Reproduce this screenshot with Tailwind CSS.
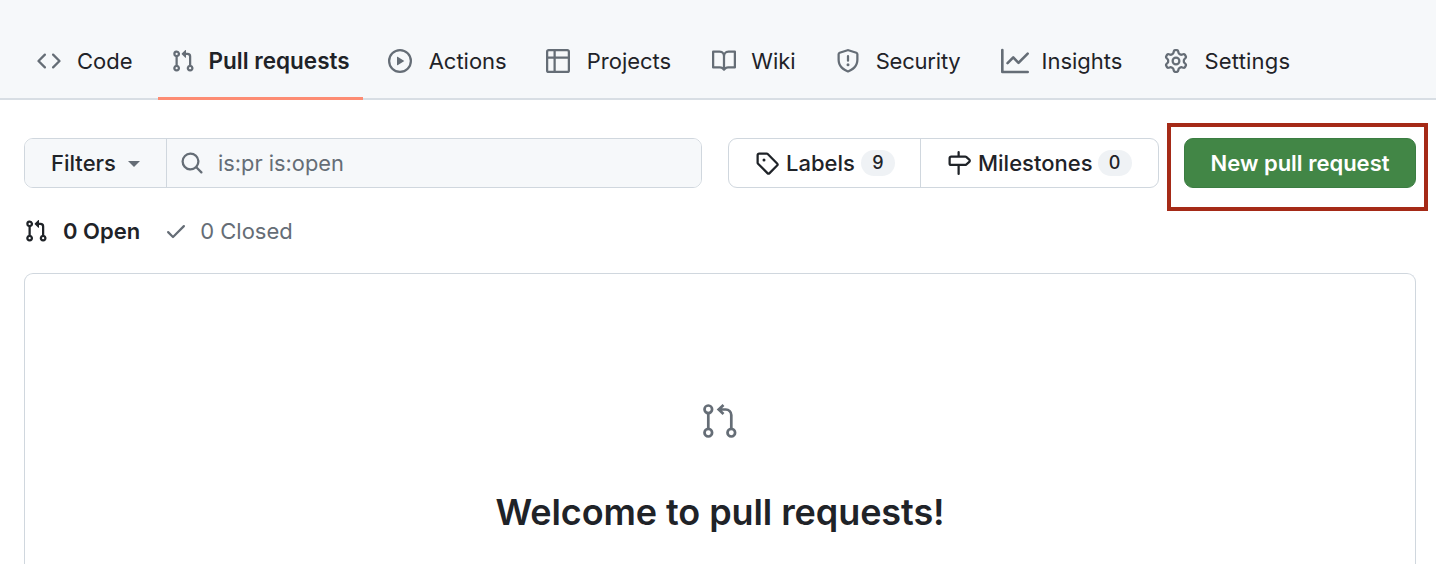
<!DOCTYPE html>
<html lang="en">
<head>
  <meta charset="UTF-8" />
  <title>Pull requests</title>
  <script src="https://cdn.jsdelivr.net/npm/@tailwindcss/browser@4"></script>
</head>
<body class="relative h-[564px] overflow-hidden bg-white font-['Inter',sans-serif] text-[22px] text-[#1f2328]">

  <!-- tabs -->
  <nav class="flex h-[100px] items-end border-b-2 border-[#d8dee4] bg-[#f6f8fa] px-6">
    <a class="flex h-[74px] items-center gap-4 px-[13px]">
      <svg class="size-6 fill-[#656d76]" viewBox="0 0 16 16"><path d="m11.28 3.22 4.25 4.25a.75.75 0 0 1 0 1.06l-4.25 4.25a.749.749 0 0 1-1.275-.326.749.749 0 0 1 .215-.734L13.94 8l-3.72-3.72a.749.749 0 0 1 .326-1.275.749.749 0 0 1 .734.215Zm-6.56 0a.751.751 0 0 1 1.042.018.751.751 0 0 1 .018 1.042L2.06 8l3.72 3.72a.749.749 0 0 1-.326 1.275.749.749 0 0 1-.734-.215L.47 8.53a.75.75 0 0 1 0-1.06Z"/></svg>
      <span>Code</span>
    </a>
    <a class="-mb-0.5 ml-3 flex h-[75px] items-center gap-[14px] border-b-[3px] border-[#fd8c73] px-[13px] text-[22.5px] font-semibold">
      <svg class="size-6 fill-[#656d76]" viewBox="0 0 16 16"><path d="M1.5 3.25a2.25 2.25 0 1 1 3 2.122v5.256a2.251 2.251 0 1 1-1.5 0V5.372A2.25 2.25 0 0 1 1.5 3.25Zm5.677-.177L9.573.677A.25.25 0 0 1 10 .854V2.5h1A2.5 2.5 0 0 1 13.5 5v5.628a2.251 2.251 0 1 1-1.5 0V5a1 1 0 0 0-1-1h-1v1.646a.25.25 0 0 1-.427.177L7.177 3.427a.25.25 0 0 1 0-.354ZM3.75 2.5a.75.75 0 1 0 0 1.5.75.75 0 0 0 0-1.5Zm0 9.5a.75.75 0 1 0 0 1.5.75.75 0 0 0 0-1.5Zm8.25.75a.75.75 0 1 0 1.5 0 .75.75 0 0 0-1.5 0Z"/></svg>
      <span>Pull requests</span>
    </a>
    <a class="ml-3 flex h-[74px] items-center gap-[17px] px-[13px]">
      <svg class="size-6 fill-[#656d76]" viewBox="0 0 16 16"><path d="M8 0a8 8 0 1 1 0 16A8 8 0 0 1 8 0ZM1.5 8a6.5 6.5 0 1 0 13 0 6.5 6.5 0 0 0-13 0Zm4.879-2.773 4.264 2.559a.25.25 0 0 1 0 .428l-4.264 2.559A.25.25 0 0 1 6 10.559V5.442a.25.25 0 0 1 .379-.215Z"/></svg>
      <span>Actions</span>
    </a>
    <a class="ml-[13px] flex h-[74px] items-center gap-[17px] px-[13px]">
      <svg class="size-6 fill-[#656d76]" viewBox="0 0 16 16"><path d="M0 1.75C0 .784.784 0 1.75 0h12.5C15.216 0 16 .784 16 1.75v12.5A1.75 1.75 0 0 1 14.25 16H1.75A1.75 1.75 0 0 1 0 14.25ZM6.5 6.5v8h7.75a.25.25 0 0 0 .25-.25V6.5Zm8-1.5V1.75a.25.25 0 0 0-.25-.25H6.5V5Zm-13 1.5v7.75c0 .138.112.25.25.25H5v-8ZM5 5V1.5H1.75a.25.25 0 0 0-.25.25V5Z"/></svg>
      <span>Projects</span>
    </a>
    <a class="ml-[15px] flex h-[74px] items-center gap-[15px] px-[13px]">
      <svg class="size-6 fill-[#656d76]" viewBox="0 0 16 16"><path d="M0 1.75A.75.75 0 0 1 .75 1h4.253c1.227 0 2.317.59 3 1.501A3.743 3.743 0 0 1 11.006 1h4.245a.75.75 0 0 1 .75.75v10.5a.75.75 0 0 1-.75.75h-4.507a2.25 2.25 0 0 0-1.591.659l-.622.621a.75.75 0 0 1-1.06 0l-.622-.621A2.25 2.25 0 0 0 5.258 13H.75a.75.75 0 0 1-.75-.75Zm7.251 10.324.004-5.073-.002-2.253A2.25 2.25 0 0 0 5.003 2.5H1.5v9h3.757a3.75 3.75 0 0 1 1.994.574ZM8.755 4.75l-.004 7.322a3.752 3.752 0 0 1 1.992-.572H14.5v-9h-3.495a2.25 2.25 0 0 0-2.25 2.25Z"/></svg>
      <span>Wiki</span>
    </a>
    <a class="ml-[14px] flex h-[74px] items-center gap-4 px-[13px]">
      <svg class="size-6 fill-[#656d76]" viewBox="0 0 16 16"><path d="M7.467.133a1.748 1.748 0 0 1 1.066 0l5.25 1.68A1.75 1.75 0 0 1 15 3.48V7c0 1.566-.32 3.182-1.303 4.682-.983 1.498-2.585 2.813-5.032 3.855a1.697 1.697 0 0 1-1.33 0c-2.447-1.042-4.049-2.357-5.032-3.855C1.32 10.182 1 8.566 1 7V3.48a1.75 1.75 0 0 1 1.217-1.667Zm.61 1.429a.25.25 0 0 0-.153 0l-5.25 1.68a.25.25 0 0 0-.174.238V7c0 1.358.275 2.666 1.057 3.86.784 1.194 2.121 2.34 4.366 3.297a.196.196 0 0 0 .154 0c2.245-.956 3.582-2.104 4.366-3.298C13.225 9.666 13.5 8.36 13.5 7V3.48a.251.251 0 0 0-.174-.237l-5.25-1.68ZM8.75 4.75v3a.75.75 0 0 1-1.5 0v-3a.75.75 0 0 1 1.5 0ZM9 10.5a1 1 0 1 1-2 0 1 1 0 0 1 2 0Z"/></svg>
      <span class="tracking-[-0.2px]">Security</span>
    </a>
    <a class="ml-3.5 flex h-[74px] items-center gap-[13px] px-[13px]">
      <svg class="size-7 fill-[#656d76]" viewBox="0 0 16 16"><path d="M1.5 1.75V13.5h13.75a.75.75 0 0 1 0 1.5H.75a.75.75 0 0 1-.75-.75V1.75a.75.75 0 0 1 1.5 0Zm14.28 2.53-5.25 5.25a.75.75 0 0 1-1.06 0L7 7.06 4.28 9.78a.751.751 0 0 1-1.042-.018.751.751 0 0 1-.018-1.042l3.25-3.25a.75.75 0 0 1 1.06 0L10 7.94l4.72-4.72a.751.751 0 0 1 1.042.018.751.751 0 0 1 .018 1.042Z"/></svg>
      <span>Insights</span>
    </a>
    <a class="ml-4 flex h-[74px] items-center gap-4 px-[13px]">
      <svg class="size-6 fill-[#656d76]" viewBox="0 0 16 16"><path d="M8 0a8.2 8.2 0 0 1 .701.031C9.444.095 9.99.645 10.16 1.29l.288 1.107c.018.066.079.158.212.224.231.114.454.243.668.386.123.082.233.09.299.071l1.103-.303c.644-.176 1.392.021 1.82.63.27.385.506.792.704 1.218.315.675.111 1.422-.364 1.891l-.814.806c-.049.048-.098.147-.088.294.016.257.016.515 0 .772-.01.147.038.246.088.294l.814.806c.475.469.679 1.216.364 1.891a7.977 7.977 0 0 1-.704 1.217c-.428.61-1.176.807-1.82.63l-1.102-.302c-.067-.019-.177-.011-.3.071a5.909 5.909 0 0 1-.668.386c-.133.066-.194.158-.211.224l-.29 1.106c-.168.646-.715 1.196-1.458 1.26a8.006 8.006 0 0 1-1.402 0c-.743-.064-1.289-.614-1.458-1.26l-.289-1.106c-.018-.066-.079-.158-.212-.224a5.738 5.738 0 0 1-.668-.386c-.123-.082-.233-.09-.299-.071l-1.103.303c-.644.176-1.392-.021-1.82-.63a8.12 8.12 0 0 1-.704-1.218c-.315-.675-.111-1.422.363-1.891l.815-.806c.05-.048.098-.147.088-.294a6.214 6.214 0 0 1 0-.772c.01-.147-.038-.246-.088-.294l-.815-.806C.635 6.045.431 5.298.746 4.623a7.92 7.92 0 0 1 .704-1.217c.428-.61 1.176-.807 1.82-.63l1.102.302c.067.019.177.011.3-.071.214-.143.437-.272.668-.386.133-.066.194-.158.211-.224l.29-1.106C6.009.645 6.556.095 7.299.03 7.53.01 7.764 0 8 0Zm-.571 1.525c-.036.003-.108.036-.137.146l-.289 1.105c-.147.561-.549.967-.998 1.189-.173.086-.34.183-.5.29-.417.278-.97.423-1.529.27l-1.103-.303c-.109-.03-.175.016-.195.045-.22.312-.412.644-.573.99-.014.031-.021.11.059.19l.815.806c.411.406.562.957.53 1.456a4.709 4.709 0 0 0 0 .582c.032.499-.119 1.05-.53 1.456l-.815.806c-.081.08-.073.159-.059.19.162.346.353.677.573.989.02.03.085.076.195.046l1.102-.303c.56-.153 1.113-.008 1.53.27.161.107.328.204.501.29.447.222.85.629.997 1.189l.289 1.105c.029.109.101.143.137.146a6.6 6.6 0 0 0 1.142 0c.036-.003.108-.036.137-.146l.289-1.105c.147-.561.549-.967.998-1.189.173-.086.34-.183.5-.29.417-.278.97-.423 1.529-.27l1.103.303c.109.029.175-.016.195-.045.22-.313.411-.644.573-.99.014-.031.021-.11-.059-.19l-.815-.806c-.411-.406-.562-.957-.53-1.456a4.709 4.709 0 0 0 0-.582c-.032-.499.119-1.05.53-1.456l.815-.806c.081-.08.073-.159.059-.19a6.464 6.464 0 0 0-.573-.989c-.02-.03-.085-.076-.195-.046l-1.102.303c-.56.153-1.113.008-1.53-.27a4.44 4.44 0 0 0-.501-.29c-.447-.222-.85-.629-.997-1.189l-.289-1.105c-.029-.11-.101-.143-.137-.146a6.6 6.6 0 0 0-1.142 0ZM11 8a3 3 0 1 1-6 0 3 3 0 0 1 6 0ZM9.5 8a1.5 1.5 0 1 0-3.001.001A1.5 1.5 0 0 0 9.5 8Z"/></svg>
      <span class="tracking-[0.2px]">Settings</span>
    </a>
  </nav>

  <main class="pr-5 pl-6">
    <!-- filters row -->
    <div class="mt-[38px] flex h-[50px]">
      <div class="flex w-[678px] overflow-hidden rounded-[9px] border border-[#d0d7de]">
        <div class="flex w-[142px] shrink-0 items-center gap-3 border-r border-[#d0d7de] bg-[#f6f8fa] pl-[26px] font-medium">
          <span>Filters</span>
          <span class="mt-0.5 size-0 border-x-[6px] border-t-[6px] border-x-transparent border-t-[#656d76]"></span>
        </div>
        <div class="flex flex-1 items-center gap-[14px] bg-[#f6f8fa] pl-[13px] text-[21.8px] text-[#656d76]">
          <svg class="size-6 fill-[#656d76]" viewBox="0 0 16 16"><path d="M10.68 11.74a6 6 0 0 1-7.922-8.982 6 6 0 0 1 8.982 7.922l3.04 3.04a.749.749 0 0 1-.326 1.275.749.749 0 0 1-.734-.215ZM11.5 7a4.499 4.499 0 1 0-8.997 0A4.499 4.499 0 0 0 11.5 7Z"/></svg>
          <span>is:pr is:open</span>
        </div>
      </div>

      <div class="ml-[26px] flex w-[431px] rounded-[9px] border border-[#d0d7de] font-medium">
        <div class="flex w-[192px] items-center border-r border-[#d0d7de] pl-[26px]">
          <svg class="mr-[7px] size-6 fill-[#1f2328]" viewBox="0 0 16 16"><path d="M1 7.775V2.75C1 1.784 1.784 1 2.75 1h5.025c.464 0 .91.184 1.238.513l6.25 6.25a1.75 1.75 0 0 1 0 2.474l-5.026 5.026a1.75 1.75 0 0 1-2.474 0l-6.25-6.25A1.752 1.752 0 0 1 1 7.775Zm1.5 0c0 .066.026.13.073.177l6.25 6.25a.25.25 0 0 0 .354 0l5.025-5.025a.25.25 0 0 0 0-.354l-6.25-6.25a.25.25 0 0 0-.177-.073H2.75a.25.25 0 0 0-.25.25ZM6 5a1 1 0 1 1 0 2 1 1 0 0 1 0-2Z"/></svg>
          <span>Labels</span>
          <span class="ml-1.5 flex h-[26px] w-[34px] items-center justify-center rounded-full bg-[#eff2f5] text-lg">9</span>
        </div>
        <div class="flex flex-1 items-center pl-[26px]">
          <svg class="mr-[7px] size-6 fill-[#1f2328]" viewBox="0 0 16 16"><path d="M7.75 0a.75.75 0 0 1 .75.75V3h3.634c.414 0 .814.147 1.13.414l2.07 1.75a1.75 1.75 0 0 1 0 2.672l-2.07 1.75a1.75 1.75 0 0 1-1.13.414H8.5v5.25a.75.75 0 0 1-1.5 0V10H2.75A1.75 1.75 0 0 1 1 8.25v-3.5C1 3.784 1.784 3 2.75 3H7V.75A.75.75 0 0 1 7.75 0Zm4.384 8.5a.25.25 0 0 0 .161-.06l2.07-1.75a.248.248 0 0 0 0-.38l-2.07-1.75a.25.25 0 0 0-.161-.06H2.75a.25.25 0 0 0-.25.25v3.5c0 .138.112.25.25.25h9.384Z"/></svg>
          <span>Milestones</span>
          <span class="ml-[5px] flex h-[26px] w-[34px] items-center justify-center rounded-full bg-[#eff2f5] text-lg">0</span>
        </div>
      </div>

      <button class="ml-[25px] flex w-[232px] items-center justify-center rounded-[9px] border border-[#3b7d42] bg-[#428646] font-semibold text-white">New pull request</button>
    </div>

    <!-- open / closed -->
    <div class="mt-[25px] flex h-[36px] items-center">
      <svg class="size-6 fill-[#1f2328]" viewBox="0 0 16 16"><path d="M1.5 3.25a2.25 2.25 0 1 1 3 2.122v5.256a2.251 2.251 0 1 1-1.5 0V5.372A2.25 2.25 0 0 1 1.5 3.25Zm5.677-.177L9.573.677A.25.25 0 0 1 10 .854V2.5h1A2.5 2.5 0 0 1 13.5 5v5.628a2.251 2.251 0 1 1-1.5 0V5a1 1 0 0 0-1-1h-1v1.646a.25.25 0 0 1-.427.177L7.177 3.427a.25.25 0 0 1 0-.354ZM3.75 2.5a.75.75 0 1 0 0 1.5.75.75 0 0 0 0-1.5Zm0 9.5a.75.75 0 1 0 0 1.5.75.75 0 0 0 0-1.5Zm8.25.75a.75.75 0 1 0 1.5 0 .75.75 0 0 0-1.5 0Z"/></svg>
      <span class="ml-[15px] font-semibold">0 Open</span>
      <svg class="ml-6 size-6 fill-[#656d76]" viewBox="0 0 16 16"><path d="M13.78 4.22a.75.75 0 0 1 0 1.06l-7.25 7.25a.75.75 0 0 1-1.06 0L2.22 9.28a.751.751 0 0 1 .018-1.042.751.751 0 0 1 1.042-.018L6 10.94l6.72-6.72a.75.75 0 0 1 1.06 0Z"/></svg>
      <span class="ml-3 text-[#656d76]">0 Closed</span>
    </div>

    <!-- blankslate, cut off by the bottom of the window -->
    <section class="mt-6 flex h-[291px] flex-col items-center rounded-t-[9px] border border-b-0 border-[#d0d7de] pt-[130px]">
      <svg class="size-9 fill-none stroke-[#656d76] stroke-[2.7]" viewBox="0 0 36 36">
        <circle cx="6.3" cy="5.3" r="3.8" />
        <circle cx="6.3" cy="28.7" r="3.8" />
        <circle cx="29.3" cy="28.7" r="3.8" />
        <path d="M6.3 9v16M29.3 25V11a5.5 5.5 0 0 0-5.5-5.5H16.5M21.5 1l-4.8 4.5 4.8 4.5" />
      </svg>
      <h2 class="mt-[44px] text-[36px] leading-[56px] font-semibold tracking-[-0.08px]">Welcome to pull requests!</h2>
    </section>
  </main>

  <!-- red highlight over the button -->
  <div class="absolute top-[123px] left-[1167px] h-[88px] w-[261px] border-4 border-[#a52a17]"></div>
</body>
</html>
